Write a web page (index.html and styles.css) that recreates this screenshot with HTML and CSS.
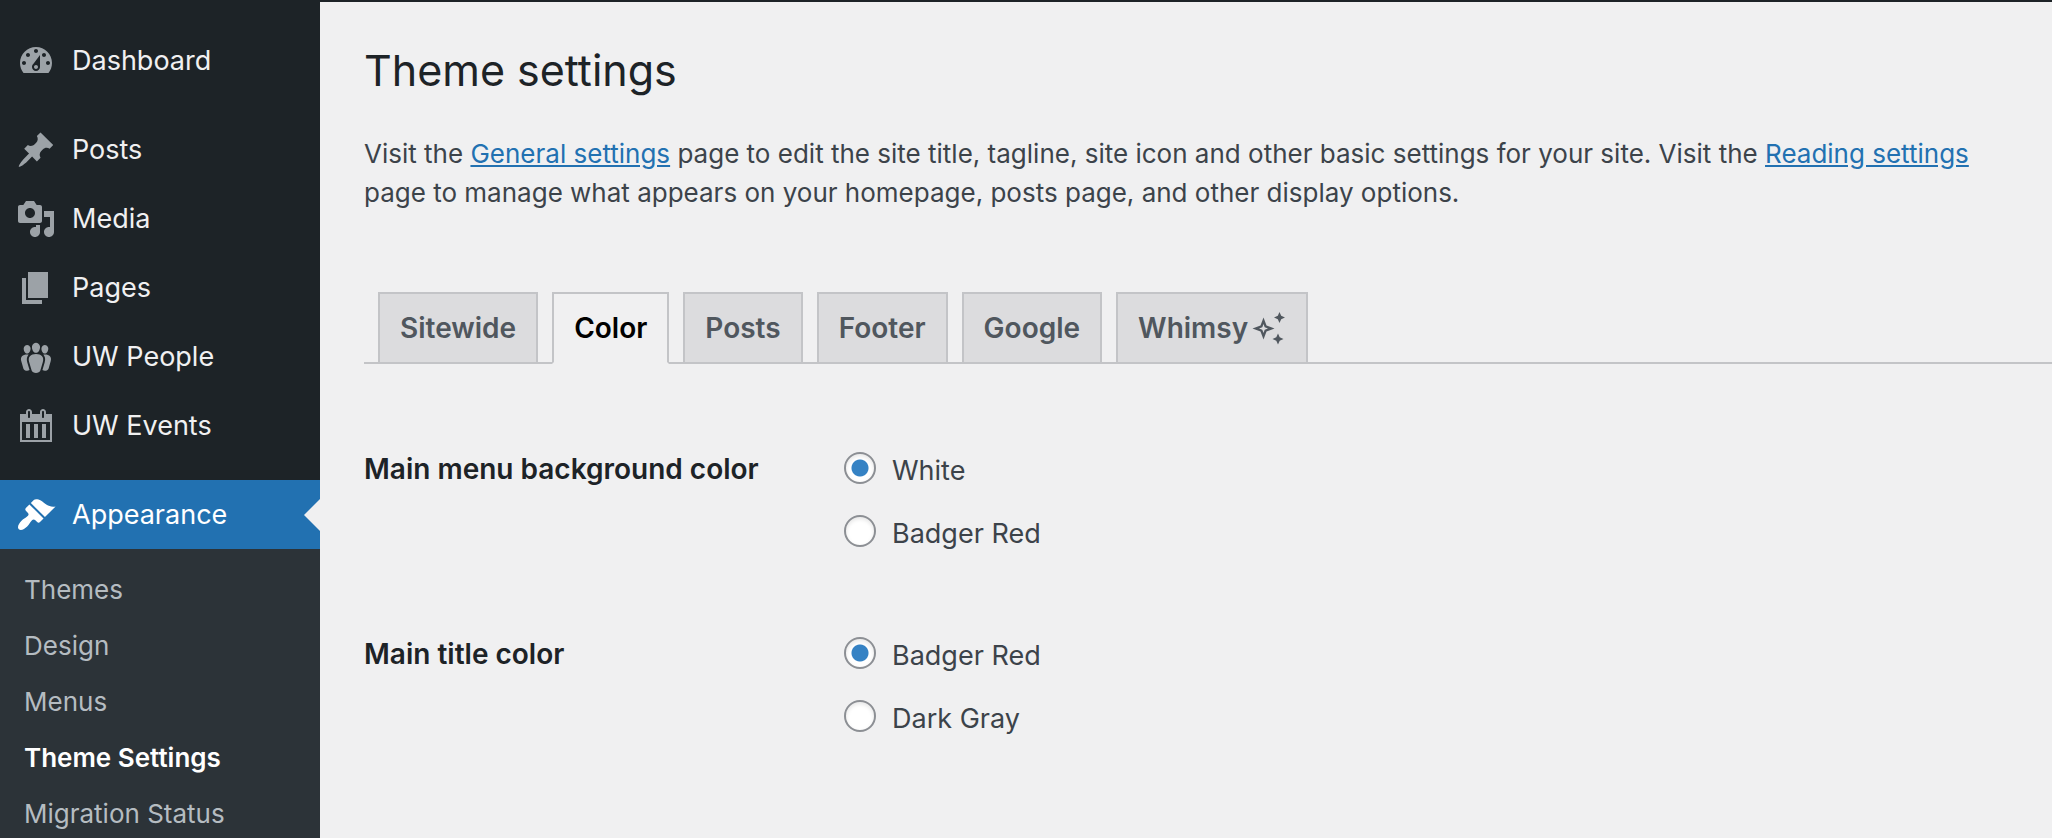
FILE: index.html
```
<!DOCTYPE html>
<html lang="en">
<head>
  <meta charset="UTF-8">
  <meta name="viewport" content="width=device-width, initial-scale=1.0">
  <title>Theme settings</title>
  <link rel="stylesheet" href="styles.css">
</head>
<body>
  <nav class="admin-menu" aria-label="Main menu">
    <ul class="menu-list">
      <li>
        <a class="menu-item" href="#">
          <svg class="menu-icon" viewBox="0 0 20 20"><path d="M3.76 16h12.48c1.1-1.37 1.76-3.11 1.76-5 0-4.42-3.58-8-8-8s-8 3.58-8 8c0 1.89.66 3.63 1.76 5zM10 4c.55 0 1 .45 1 1s-.45 1-1 1-1-.45-1-1 .45-1 1-1zM6 6c.55 0 1 .45 1 1s-.45 1-1 1-1-.45-1-1 .45-1 1-1zm8 0c.55 0 1 .45 1 1s-.45 1-1 1-1-.45-1-1 .45-1 1-1zm-5.37 5.55L12 7v6c0 1.1-.9 2-2 2s-2-.9-2-2c0-.57.24-1.08.63-1.45zM4 10c.55 0 1 .45 1 1s-.45 1-1 1-1-.45-1-1 .45-1 1-1zm12 0c.55 0 1 .45 1 1s-.45 1-1 1-1-.45-1-1 .45-1 1-1zm-5 3c0-.55-.45-1-1-1s-1 .45-1 1 .45 1 1 1 1-.45 1-1z"/></svg>
          Dashboard
        </a>
      </li>
      <li class="separator"></li>
      <li>
        <a class="menu-item" href="#">
          <svg class="menu-icon" viewBox="0 0 20 20"><path d="M10.44 3.02l1.82-1.82 6.36 6.35-1.83 1.82c-1.05-.68-2.48-.57-3.41.36l-.75.75c-.92.93-1.04 2.35-.35 3.41l-1.83 1.82-2.41-2.41-2.8 2.79c-.42.42-3.38 2.71-3.8 2.29s1.86-3.39 2.28-3.81l2.79-2.79L4.1 9.36l1.83-1.82c1.05.69 2.48.57 3.4-.36l.75-.75c.93-.92 1.05-2.35.36-3.41z"/></svg>
          Posts
        </a>
      </li>
      <li>
        <a class="menu-item" href="#">
          <svg class="menu-icon" viewBox="0 0 20 20"><path d="M13 11V4c0-.55-.45-1-1-1h-1.67L9 1H5L3.67 3H2c-.55 0-1 .45-1 1v7c0 .55.45 1 1 1h10c.55 0 1-.45 1-1zM7 4.5c1.38 0 2.500 1.120 2.500 2.500S8.380 9.500 7 9.500 4.500 8.380 4.500 7 5.620 4.500 7 4.500zM14 6h5v10.500c0 1.380-1.120 2.500-2.500 2.500S14 17.880 14 16.500s1.120-2.500 2.500-2.500c.17 0 .34.02.5.05V9h-3V6zm-4 8.050V13h2v3.500c0 1.380-1.120 2.500-2.500 2.500S7 17.880 7 16.500 8.120 14 9.500 14c.17 0 .34.02.5.05z"/></svg>
          Media
        </a>
      </li>
      <li>
        <a class="menu-item" href="#">
          <svg class="menu-icon" viewBox="0 0 20 20"><path d="M6 15V2h10v13H6zm-1 1h8v2H3V5h2v11z"/></svg>
          Pages
        </a>
      </li>
      <li>
        <a class="menu-item" href="#">
          <svg class="menu-icon" viewBox="0 0 20 20"><path d="M8.03 4.46c-.29 1.28.55 3.46 1.97 3.46 1.41 0 2.25-2.18 1.96-3.46-.22-.98-1.08-1.63-1.96-1.63-.89 0-1.74.65-1.97 1.63zm-4.13.9c-.25 1.08.47 2.93 1.67 2.93s1.92-1.85 1.67-2.93c-.19-.83-.92-1.39-1.67-1.39s-1.48.56-1.67 1.39zm8.86 0c-.25 1.08.47 2.93 1.66 2.93 1.2 0 1.92-1.85 1.67-2.93-.19-.83-.92-1.39-1.67-1.39-.74 0-1.47.56-1.66 1.39zm-.59 11.43l1.25-4.3C14.2 10 12.71 8.47 10 8.47c-2.72 0-4.21 1.53-3.44 4.02l1.26 4.3C8.05 17.51 9 18 10 18c.98 0 1.94-.49 2.17-1.21zm-6.1-7.63c-.49.67-.96 1.83-.42 3.59l1.12 3.79c-.34.2-.77.31-1.2.31-.85 0-1.65-.41-1.85-1.03l-1.07-3.65c-.65-2.11.61-3.4 2.92-3.4.27 0 .54.02.79.06-.1.1-.2.22-.29.33zm8.35-.39c2.31 0 3.58 1.29 2.92 3.4l-1.07 3.65c-.2.62-1 1.03-1.85 1.03-.43 0-.86-.11-1.2-.31l1.11-3.77c.55-1.78.08-2.94-.42-3.61-.08-.11-.18-.23-.28-.33.25-.04.51-.06.79-.06z"/></svg>
          UW People
        </a>
      </li>
      <li>
        <a class="menu-item" href="#">
          <svg class="menu-icon" viewBox="0 0 20 20"><path d="M15 4h3v14H2V4h3V3c0-.83.67-1.5 1.5-1.5S8 2.17 8 3v1h4V3c0-.83.67-1.5 1.5-1.5S15 2.17 15 3v1zM6 3v2.5c0 .28.22.5.5.5s.5-.22.5-.5V3c0-.28-.22-.5-.5-.5S6 2.72 6 3zm7 0v2.5c0 .28.22.5.5.5s.5-.22.5-.5V3c0-.28-.22-.5-.5-.5s-.5.22-.5.5zm4 14V8H3v9h14zM7 9v7H5V9h2zm4 0v7H9V9h2zm4 0v7h-2V9h2z"/></svg>
          UW Events
        </a>
      </li>
      <li class="separator"></li>
      <li>
        <a class="menu-item current" href="#">
          <svg class="menu-icon" viewBox="0 0 20 20"><path d="M14.48 11.06L7.41 3.99l1.5-1.5c.5-.56 2.3-.47 3.51.32 1.21.8 1.43 1.28 2.91 2.1 1.18.64 2.45 1.26 4.45.85zm-.71.71L6.7 4.7 4.93 6.47c-.39.39-.39 1.02 0 1.41l1.06 1.06c.39.39.39 1.03 0 1.42-.6.6-1.43 1.11-2.21 1.69-.35.26-.7.53-1.01.84C1.43 14.23.4 16.08 1.4 17.07c.99 1 2.84-.03 4.18-1.36.31-.31.58-.66.85-1.02.57-.78 1.08-1.61 1.69-2.21.39-.39 1.02-.39 1.41 0l1.06 1.06c.39.39 1.02.39 1.41 0z"/></svg>
          Appearance
        </a>
        <ul class="submenu">
          <li><a href="#">Themes</a></li>
          <li><a href="#">Design</a></li>
          <li><a href="#">Menus</a></li>
          <li><a class="active" href="#" aria-current="page">Theme Settings</a></li>
          <li><a href="#">Migration Status</a></li>
        </ul>
      </li>
    </ul>
  </nav>

  <main class="content">
    <h1>Theme settings</h1>
    <p class="intro">Visit the <a href="#">General settings</a> page to edit the site title, tagline, site icon and other basic settings for your site. Visit the <a href="#">Reading settings</a> page to manage what appears on your homepage, posts page, and other display options.</p>

    <nav class="tabs" aria-label="Settings sections">
      <a class="tab" href="#">Sitewide</a>
      <a class="tab tab-active" href="#" aria-current="page">Color</a>
      <a class="tab" href="#">Posts</a>
      <a class="tab" href="#">Footer</a>
      <a class="tab" href="#">Google</a>
      <a class="tab" href="#">Whimsy
        <svg class="sparkle" viewBox="0 0 34 34">
          <path fill-rule="evenodd" d="M11.500 6.500L14.500 14.500L22.500 17.500L14.500 20.500L11.500 28.500L8.500 20.500L.5 17.500L8.500 14.500zM11.500 13L10.300 16.300L7 17.500L10.300 18.700L11.500 22L12.700 18.700L16 17.500L12.700 16.300z"/>
          <path d="M27.500 1L29.200 4.800L33 6.500L29.200 8.200L27.500 12L25.800 8.200L22 6.500L25.800 4.800zM26 22.500L27.700 26.300L31.500 28L27.700 29.700L26 33.500L24.300 29.700L20.500 28L24.300 26.300z"/>
        </svg>
      </a>
    </nav>

    <form class="settings">
      <fieldset class="setting">
        <legend class="setting-name">Main menu background color</legend>
        <div class="options">
          <label><input type="radio" name="menu-color" value="white" checked> White</label>
          <label><input type="radio" name="menu-color" value="red"> Badger Red</label>
        </div>
      </fieldset>
      <fieldset class="setting">
        <legend class="setting-name">Main title color</legend>
        <div class="options">
          <label><input type="radio" name="title-color" value="red" checked> Badger Red</label>
          <label><input type="radio" name="title-color" value="gray"> Dark Gray</label>
        </div>
      </fieldset>
    </form>
  </main>
</body>
</html>
```
FILE: styles.css
```
* {
  box-sizing: border-box;
}

body {
  margin: 0;
  min-height: 100vh;
  display: flex;
  background: #f0f0f1;
  color: #3c434a;
  font-family: Inter, "Liberation Sans", sans-serif;
  font-size: 26px;
}

ul {
  list-style: none;
  margin: 0;
  padding: 0;
}

/* Sidebar */
.admin-menu {
  flex: 0 0 320px;
  background: #1d2327;
}

.menu-list {
  padding-top: 26px;
}

.separator {
  height: 20px;
}

.menu-item {
  display: flex;
  align-items: center;
  gap: 16px;
  height: 69px;
  padding-left: 16px;
  color: #f0f0f1;
  font-size: 27px;
  text-decoration: none;
}

.menu-icon {
  width: 40px;
  height: 40px;
  fill: #9ca2a7;
}

.current {
  position: relative;
  background: #2271b1;
  color: #fff;
}

.current .menu-icon {
  fill: #fff;
}

.current::after {
  content: "";
  position: absolute;
  right: 0;
  top: 19px;
  border: 16px solid transparent;
  border-left-width: 0;
  border-right-color: #f0f0f1;
}

.submenu {
  padding-top: 13px;
  background: #2c3338;
}

.submenu a {
  display: block;
  padding-left: 24px;
  color: #b5bcc1;
  font-size: 26px;
  line-height: 56px;
  text-decoration: none;
}

.submenu .active {
  color: #fff;
  font-weight: 600;
}

/* Page */
.content {
  flex: 1;
  min-width: 0;
  padding: 38px 0 0 44px;
  border-top: 2px solid #1d2327;
}

h1 {
  margin: 0;
  color: #1d2327;
  font-size: 43px;
  font-weight: 400;
  line-height: 60px;
}

.intro {
  max-width: 1640px;
  margin: 34px 0 80px;
  line-height: 39px;
}

.intro a {
  color: #2271b1;
}

.tabs {
  display: flex;
  gap: 14px;
  padding-left: 14px;
  border-bottom: 2px solid #c3c4c7;
}

.tab {
  display: flex;
  align-items: center;
  gap: 4px;
  margin-bottom: -2px;
  padding: 10px 20px;
  border: 2px solid #c3c4c7;
  background: #dcdcde;
  color: #50575e;
  font-size: 28px;
  font-weight: 600;
  line-height: 48px;
  text-decoration: none;
}

.tab-active {
  border-bottom-color: #f0f0f1;
  background: #f0f0f1;
  color: #000;
}

.sparkle {
  width: 34px;
  height: 34px;
  fill: currentColor;
}

/* Settings form */
.settings {
  display: flex;
  flex-direction: column;
  gap: 80px;
  padding-top: 84px;
}

.setting {
  display: flex;
  margin: 0;
  padding: 0;
  border: 0;
}

.setting-name {
  float: left;
  width: 480px;
  padding: 0;
  color: #1d2327;
  font-size: 28px;
  font-weight: 600;
  line-height: 42px;
}

.options {
  display: flex;
  flex-direction: column;
  gap: 25px;
  padding-top: 4px;
}

.options label {
  display: flex;
  align-items: flex-start;
  gap: 16px;
  font-size: 27px;
  line-height: 38px;
}

input[type="radio"] {
  appearance: none;
  width: 32px;
  height: 32px;
  margin: 0;
  border: 2px solid #8c8f94;
  border-radius: 50%;
  background: #fff;
  box-shadow: inset 0 2px 4px rgba(0, 0, 0, 0.1);
}

input[type="radio"]:checked {
  background: radial-gradient(circle, #3582c4 8px, #fff 9px);
}
```
